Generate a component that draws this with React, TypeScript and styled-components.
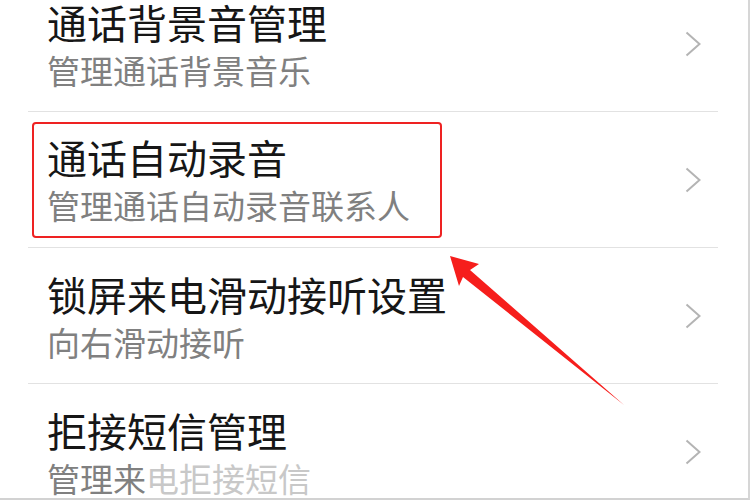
import React from 'react'
import styled, { createGlobalStyle } from 'styled-components'

const red = 'rgb(238, 34, 34)';
const titleInk = 'rgb(22, 22, 22)';
const subInk = 'rgb(128, 128, 128)';

const GlobalStyle = createGlobalStyle`
  html, body {
    margin: 0;
    padding: 0;
    background: #ffffff;
  }
  body {
    font-family: "Noto Sans CJK SC", "Noto Sans", sans-serif;
  }
`

const Screen = styled.div`
  position: relative;
  width: 750px;
  height: 500px;
  box-sizing: border-box;
  overflow: hidden;
  background: #ffffff;
  border-right: 2px solid #d6d6d6;
  border-bottom: 2px solid #d2d2d2;
`

const List = styled.div`
  display: flex;
  flex-direction: column;
  margin-top: -25px;
`

const Row = styled.div`
  display: flex;
  align-items: center;
  justify-content: space-between;
  height: 136px;
  box-sizing: border-box;
  margin: 0 30px 0 28px;
  padding: 1px 17px 0 19px;
  border-top: 1px solid #e2e2e2;
`

const TextBlock = styled.div<{ $marked?: boolean }>`
  display: flex;
  flex-direction: column;
  gap: 12px;
  ${p => p.$marked && `
    width: 410px;
    box-sizing: border-box;
    margin-left: -15px;
    padding: 13px 0 14px 13px;
    border: 2.5px solid ${red};
    border-radius: 4px;
  `}
`

const Title = styled.div`
  font-size: 40px;
  line-height: 40px;
  color: ${titleInk};
  white-space: nowrap;
`

const Sub = styled.div<{ $size?: number }>`
  font-size: ${p => p.$size ?? 33}px;
  line-height: ${p => p.$size ?? 33}px;
  color: ${subInk};
  white-space: nowrap;
`

const Faded = styled.span`
  color: rgb(200, 200, 200);
`

const Overlay = styled.svg`
  position: absolute;
  left: 0;
  top: 0;
  pointer-events: none;
`

function Chevron() {
  return (
    <svg width="16" height="26" viewBox="0 0 16 26">
      <polyline points="1.5,1.5 14.5,13 1.5,24.5" fill="none" stroke="#b4b4b4" strokeWidth="2" />
    </svg>
  )
}

function Item({ title, sub, marked, subSize }: any) {
  return (
    <Row>
      <TextBlock $marked={marked}>
        <Title>{title}</Title>
        <Sub $size={subSize}>{sub}</Sub>
      </TextBlock>
      <Chevron />
    </Row>
  )
}

export default function App() {
  return (
    <Screen>
      <GlobalStyle />
      <List>
        <Item title="通话背景音管理" sub="管理通话背景音乐" />
        <Item title="通话自动录音" sub="管理通话自动录音联系人" marked subSize={33} />
        <Item title="锁屏来电滑动接听设置" sub="向右滑动接听" />
        <Item title="拒接短信管理" sub={<>管理来<Faded>电拒接短信</Faded></>} />
      </List>
      <Overlay width="750" height="500" viewBox="0 0 750 500">
        <polygon
          points="450,256 479,264 470,270 624,405 463,277 459,286"
          fill="rgb(246, 30, 28)"
        />
      </Overlay>
    </Screen>
  )
}
